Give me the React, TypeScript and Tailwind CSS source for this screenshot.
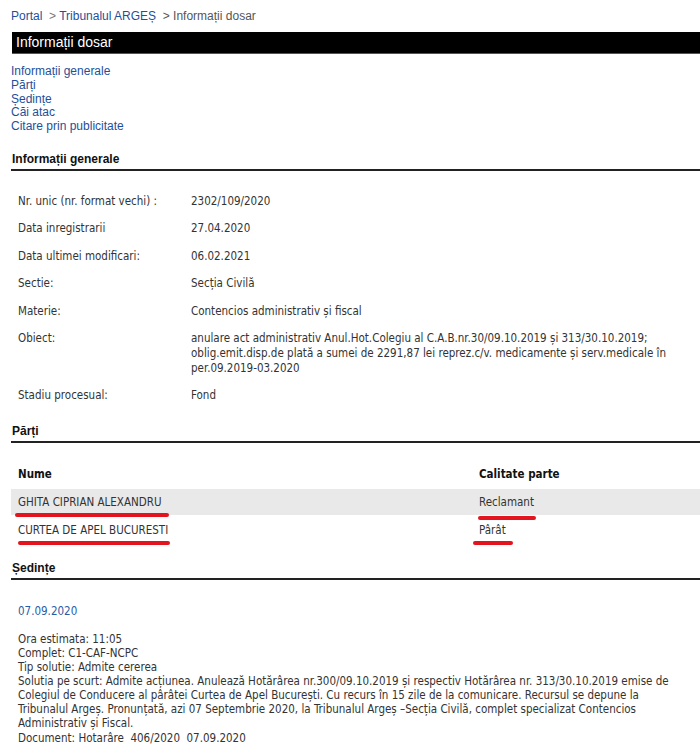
import React from 'react';

const rows: { label: string; value: React.ReactNode }[] = [
  { label: 'Nr. unic (nr. format vechi) :', value: '2302/109/2020' },
  { label: 'Data inregistrarii', value: '27.04.2020' },
  { label: 'Data ultimei modificari:', value: '06.02.2021' },
  { label: 'Sectie:', value: 'Secția Civilă' },
  { label: 'Materie:', value: 'Contencios administrativ și fiscal' },
  {
    label: 'Obiect:',
    value:
      'anulare act administrativ Anul.Hot.Colegiu al C.A.B.nr.30/09.10.2019 și 313/30.10.2019; oblig.emit.disp.de plată a sumei de 2291,87 lei reprez.c/v. medicamente și serv.medicale în per.09.2019-03.2020',
  },
  { label: 'Stadiu procesual:', value: 'Fond' },
];

const solutie = [
  'Solutia pe scurt: Admite acțiunea. Anulează Hotărârea nr.300/09.10.2019 și respectiv Hotărârea nr. 313/30.10.2019 emise de',
  'Colegiul de Conducere al pârâtei Curtea de Apel București. Cu recurs în 15 zile de la comunicare. Recursul se depune la',
  'Tribunalul Argeș. Pronunțată, azi 07 Septembrie 2020, la Tribunalul Argeș –Secția Civilă, complet specializat Contencios',
  'Administrativ și Fiscal.',
];

const arial = { fontFamily: '"Liberation Sans", Arial, sans-serif' };
const body = { fontFamily: '"DejaVu Sans Condensed", "DejaVu Sans", sans-serif' };

function SectionTitle({ children }: { children: React.ReactNode }) {
  return (
    <div className="border-b-2 border-[#222] pb-[1px] pl-[1px] text-[12px] font-bold text-[#111]" style={arial}>
      {children}
    </div>
  );
}

export default function App() {
  return (
    <div className="relative min-h-[754px] w-[700px] bg-white pl-[11px] text-[#333]">
      {/* breadcrumb */}
      <div className="pt-[8px] text-[12px] leading-[16px]" style={arial}>
        <span className="text-[#1f4f9a]">Portal</span>
        <span className="text-[#777]"> &nbsp;&gt; </span>
        <span className="text-[#1f4f9a]">Tribunalul ARGEȘ</span>
        <span className="text-[#555]"> &nbsp;&gt; Informații dosar</span>
      </div>

      <div
        className="mt-[8px] ml-[1px] h-[22px] border-b border-[#555] bg-black pl-[4px] text-[14px] leading-[21px] text-white"
        style={arial}
      >
        Informații dosar
      </div>

      <div className="mt-[11px] flex flex-col text-[12px] leading-[13.8px] text-[#1f4f9a]" style={arial}>
        <span>Informații generale</span>
        <span>Părți</span>
        <span>Ședințe</span>
        <span>Căi atac</span>
        <span>Citare prin publicitate</span>
      </div>

      <div className="mt-[16px]">
        <SectionTitle>Informații generale</SectionTitle>
      </div>

      <div className="mt-[23px] flex flex-col gap-[12.4px] pl-[7px] text-[11.5px] leading-[15px]" style={body}>
        {rows.map((r) => (
          <div key={r.label} className="flex">
            <div className="w-[173px] shrink-0">{r.label}</div>
            <div className="pr-[10px]">{r.value}</div>
          </div>
        ))}
      </div>

      <div className="mt-[19px]">
        <SectionTitle>Părți</SectionTitle>
      </div>

      <div className="mt-[16px] text-[11.5px]" style={body}>
        <div className="flex h-[30px] items-center pl-[7px] font-bold text-[#111]">
          <div className="w-[461px]">Nume</div>
          <div>Calitate parte</div>
        </div>
        <div className="flex h-[26px] items-center bg-[#e9e9e9] pl-[7px]">
          <div className="w-[461px]">GHITA CIPRIAN ALEXANDRU</div>
          <div>Reclamant</div>
        </div>
        <div className="flex h-[30px] items-center pl-[7px]">
          <div className="w-[461px]">CURTEA DE APEL BUCURESTI</div>
          <div>Pârât</div>
        </div>
      </div>

      <div className="mt-[14px]">
        <SectionTitle>Ședințe</SectionTitle>
      </div>

      <div className="mt-[24px] pl-[7px] pr-[2px] text-[11.5px] leading-[14px]" style={body}>
        <div className="text-[#2a5ca6]">07.09.2020</div>
        <div className="mt-[14px] whitespace-nowrap">
          <div>Ora estimata: 11:05</div>
          <div>Complet: C1-CAF-NCPC</div>
          <div>Tip solutie: Admite cererea</div>
          {solutie.map((line) => (
            <div key={line}>{line}</div>
          ))}
          <div className="mt-[1px]">Document: Hotarâre &nbsp;406/2020 &nbsp;07.09.2020</div>
        </div>
      </div>

      {/* red annotation strokes */}
      <div className="absolute left-[15px] top-[513px] h-[4px] w-[154px] rounded-full bg-[#e3141d]" />
      <div className="absolute left-[478px] top-[516px] h-[4px] w-[58px] rounded-full bg-[#e3141d]" />
      <div className="absolute left-[18px] top-[541px] h-[4px] w-[152px] rounded-full bg-[#e3141d]" />
      <div className="absolute left-[473px] top-[541px] h-[4px] w-[40px] rounded-full bg-[#e3141d]" />
    </div>
  );
}
